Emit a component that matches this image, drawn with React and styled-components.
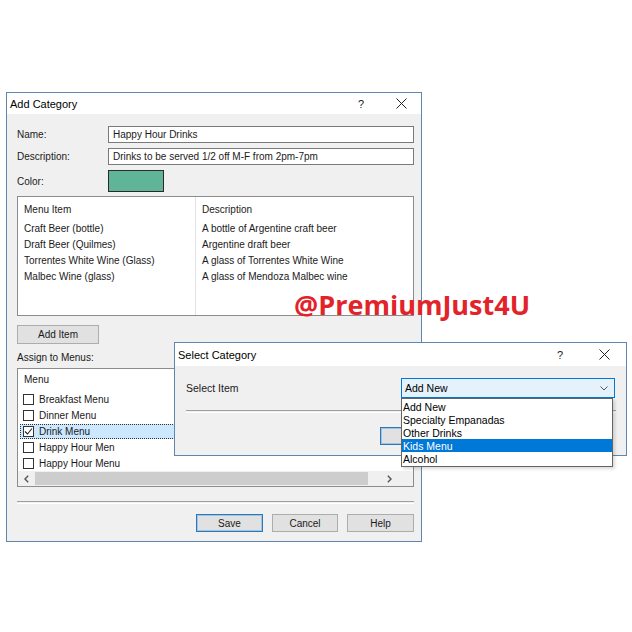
import React from 'react';
import styled, { createGlobalStyle } from 'styled-components';

const GlobalStyle = createGlobalStyle`
  html, body {
    margin: 0;
    padding: 0;
    background: #fff;
  }
  body {
    font-family: "Liberation Sans", Arial, sans-serif;
    font-size: 10px;
    color: #1a1a1a;
  }
`;

const menuItems = [
  { name: 'Craft Beer (bottle)', desc: 'A bottle of Argentine craft beer' },
  { name: 'Draft Beer (Quilmes)', desc: 'Argentine draft beer' },
  { name: 'Torrentes White Wine (Glass)', desc: 'A glass of Torrentes White Wine' },
  { name: 'Malbec Wine (glass)', desc: 'A glass of Mendoza Malbec wine' },
];

const menus = [
  { name: 'Breakfast Menu', checked: false },
  { name: 'Dinner Menu', checked: false },
  { name: 'Drink Menu', checked: true, focused: true },
  { name: 'Happy Hour Men', checked: false },
  { name: 'Happy Hour Menu', checked: false },
];

const categories = ['Add New', 'Specialty Empanadas', 'Other Drinks', 'Kids Menu', 'Alcohol'];

const Desktop = styled.div`
  position: relative;
  width: 632px;
  height: 632px;
  overflow: hidden;
`;

const Window = styled.div`
  position: absolute;
  left: ${p => p.$left}px;
  top: ${p => p.$top}px;
  width: ${p => p.$width}px;
  height: ${p => p.$height}px;
  box-sizing: border-box;
  border: 1px solid #5f87ae;
  background: #f0f0f0;
  display: flex;
  flex-direction: column;
`;

const TitleBar = styled.div`
  height: ${p => p.$h}px;
  flex: none;
  background: #fff;
  display: flex;
  align-items: center;
  padding-left: 3px;
`;

const Title = styled.div`
  flex: 1;
  font-size: 11px;
  color: #000;
`;

const TitleBtn = styled.div`
  width: ${p => p.$w}px;
  height: 100%;
  display: flex;
  align-items: center;
  justify-content: center;
  font-size: 11px;
  color: #222;
`;

const Body = styled.div`
  flex: 1;
  display: flex;
  flex-direction: column;
  padding: ${p => p.$pad};
`;

const FormGrid = styled.div`
  display: grid;
  grid-template-columns: 91px 1fr;
  grid-template-rows: 17px 17px 22px;
  row-gap: 5px;
  align-items: center;
`;

const Label = styled.div`
  white-space: nowrap;
`;

const TextBox = styled.div`
  height: 17px;
  box-sizing: border-box;
  border: 1px solid #7a7a7a;
  background: #fff;
  display: flex;
  align-items: center;
  padding-left: 4px;
  white-space: nowrap;
`;

const Swatch = styled.div`
  width: 56px;
  height: 22px;
  box-sizing: border-box;
  border: 1px solid #2a2a2a;
  background: #60b598;
`;

const ListView = styled.div`
  margin-top: 4px;
  height: 120px;
  box-sizing: border-box;
  border: 1px solid #8c8c8c;
  background: #fff;
  display: grid;
  grid-template-columns: 178px 1fr;
`;

const Column = styled.div`
  display: flex;
  flex-direction: column;
  padding: 6px 0 0 6px;
  border-right: ${p => (p.$divider ? '1px solid #e3e3e3' : 'none')};
`;

const ColHead = styled.div`
  height: 14px;
  line-height: 14px;
  margin-bottom: 4px;
  white-space: nowrap;
`;

const Cell = styled.div`
  height: 16px;
  line-height: 16px;
  white-space: nowrap;
`;

const Button = styled.div`
  width: ${p => p.$w}px;
  height: ${p => p.$h || 18}px;
  box-sizing: border-box;
  border: 1px solid ${p => (p.$default ? '#2f78b8' : '#adadad')};
  box-shadow: ${p => (p.$default ? 'inset 0 0 0 1px #9cc5e8' : 'none')};
  background: #e1e1e1;
  display: flex;
  align-items: center;
  justify-content: center;
  color: #1a1a1a;
  flex: none;
`;

const AddRow = styled.div`
  margin-top: 9px;
`;

const SectionLabel = styled.div`
  margin-top: 8px;
  height: 12px;
  line-height: 12px;
`;

const MenuBox = styled.div`
  margin-top: 4px;
  height: 119px;
  box-sizing: border-box;
  border: 1px solid #8c8c8c;
  background: #fff;
  display: flex;
  flex-direction: column;
  padding-top: 3px;
`;

const MenuHead = styled.div`
  height: 16px;
  line-height: 16px;
  padding-left: 6px;
  margin-bottom: 3px;
`;

const MenuRow = styled.div`
  height: 16px;
  display: flex;
  align-items: center;
`;

const MenuRowInner = styled.div`
  margin-left: 2px;
  flex: 1;
  height: 15px;
  box-sizing: border-box;
  display: flex;
  align-items: center;
  gap: 5px;
  padding-left: 2px;
  background: ${p => (p.$focused ? '#cce8ff' : 'transparent')};
  border: 1px ${p => (p.$focused ? 'dotted #333' : 'solid transparent')};
`;

const Check = styled.div`
  width: 11px;
  height: 11px;
  box-sizing: border-box;
  border: 1px solid #333;
  background: #fff;
  display: flex;
  align-items: center;
  justify-content: center;
  flex: none;
`;

const ScrollBar = styled.div`
  margin-top: auto;
  height: 15px;
  background: #f0f0f0;
  display: flex;
  align-items: stretch;
`;

const ScrollArrow = styled.div`
  width: 17px;
  display: flex;
  align-items: center;
  justify-content: center;
  flex: none;
`;

const Thumb = styled.div`
  width: 333px;
  background: #cdcdcd;
  margin: 1px 0;
  flex: none;
`;

const Corner = styled.div`
  width: 15px;
  flex: none;
`;

const Gap = styled.div`
  flex: 1;
`;

const Separator = styled.div`
  margin-top: ${p => p.$mt}px;
  height: 1px;
  border-top: 1px solid #a0a0a0;
  border-bottom: 1px solid #fff;
`;

const ButtonRow = styled.div`
  margin-top: ${p => p.$mt}px;
  display: flex;
  justify-content: ${p => p.$justify || 'flex-end'};
  gap: ${p => p.$gap}px;
  padding-left: ${p => p.$indent || 0}px;
`;

const SelectRow = styled.div`
  margin-top: 12px;
  display: grid;
  grid-template-columns: 215px 214px;
  align-items: center;
  font-size: 10.5px;
`;

const ComboWrap = styled.div`
  position: relative;
`;

const Combo = styled.div`
  height: 20px;
  box-sizing: border-box;
  border: 1px solid #0078d7;
  background: #e5f1fb;
  display: flex;
  align-items: center;
  padding: 0 6px 0 3px;
  color: #000;
`;

const ComboText = styled.div`
  flex: 1;
`;

const DropList = styled.div`
  position: absolute;
  top: 100%;
  left: 0;
  width: 212px;
  box-sizing: border-box;
  border: 1px solid #646464;
  padding: 1px 0 1px;
  background: #fff;
  box-shadow: 2px 2px 3px rgba(0, 0, 0, 0.15);
  z-index: 5;
`;

const DropItem = styled.div`
  height: 13px;
  line-height: 15px;
  padding-left: 1px;
  font-size: 10.5px;
  background: ${p => (p.$selected ? '#0078d7' : 'transparent')};
  color: ${p => (p.$selected ? '#fff' : '#000')};
  white-space: nowrap;
  overflow: hidden;
`;

const Watermark = styled.div`
  position: absolute;
  left: 294px;
  top: 289px;
  font-family: "Open Sans", "Liberation Sans", sans-serif;
  font-weight: 700;
  font-size: 27px;
  line-height: 1.2;
  color: #e3232a;
  white-space: nowrap;
  z-index: 10;
`;

const CloseIcon = () => (
  <svg width="11" height="11" viewBox="0 0 11 11">
    <path d="M0.5 0.5 L10.5 10.5 M10.5 0.5 L0.5 10.5" stroke="#222" strokeWidth="1" fill="none" />
  </svg>
);

const Chevron = () => (
  <svg width="8" height="5" viewBox="0 0 8 5">
    <path d="M0.5 0.5 L4 4 L7.5 0.5" stroke="#555" strokeWidth="1" fill="none" />
  </svg>
);

const Tick = () => (
  <svg width="9" height="9" viewBox="0 0 9 9">
    <path d="M1 4.5 L3.5 7 L8 1.5" stroke="#222" strokeWidth="1.1" fill="none" />
  </svg>
);

const ArrowIcon = ({ dir }) => (
  <svg width="5" height="8" viewBox="0 0 5 8">
    <path
      d={dir === 'left' ? 'M4.2 0.8 L1 4 L4.2 7.2' : 'M0.8 0.8 L4 4 L0.8 7.2'}
      stroke="#555"
      strokeWidth="1.4"
      fill="none"
    />
  </svg>
);

const TitleBarRow = ({ title, h, w }) => (
  <TitleBar $h={h}>
    <Title>{title}</Title>
    <TitleBtn $w={w}>?</TitleBtn>
    <TitleBtn $w={w}><CloseIcon /></TitleBtn>
  </TitleBar>
);

const AddCategory = () => (
  <Window $left={6} $top={92} $width={416} $height={450}>
    <TitleBarRow title="Add Category" h={21} w={40} />
    <Body $pad="12px 7px 9px 10px">
      <FormGrid>
        <Label>Name:</Label>
        <TextBox>Happy Hour Drinks</TextBox>
        <Label>Description:</Label>
        <TextBox>Drinks to be served 1/2 off M-F from 2pm-7pm</TextBox>
        <Label>Color:</Label>
        <Swatch />
      </FormGrid>

      <ListView>
        <Column $divider>
          <ColHead>Menu Item</ColHead>
          {menuItems.map(item => <Cell key={item.name}>{item.name}</Cell>)}
        </Column>
        <Column>
          <ColHead>Description</ColHead>
          {menuItems.map(item => <Cell key={item.desc}>{item.desc}</Cell>)}
        </Column>
      </ListView>

      <AddRow>
        <Button $w={82} $h={19}>Add Item</Button>
      </AddRow>

      <SectionLabel>Assign to Menus:</SectionLabel>
      <MenuBox>
        <MenuHead>Menu</MenuHead>
        {menus.map(menu => (
          <MenuRow key={menu.name}>
            <MenuRowInner $focused={menu.focused}>
              <Check>{menu.checked && <Tick />}</Check>
              {menu.name}
            </MenuRowInner>
          </MenuRow>
        ))}
        <ScrollBar>
          <ScrollArrow><ArrowIcon dir="left" /></ScrollArrow>
          <Thumb />
          <Gap />
          <ScrollArrow><ArrowIcon dir="right" /></ScrollArrow>
          <Corner />
        </ScrollBar>
      </MenuBox>

      <Separator $mt={14} />
      <ButtonRow $mt={10} $gap={9}>
        <Button $w={67} $default>Save</Button>
        <Button $w={66}>Cancel</Button>
        <Button $w={67}>Help</Button>
      </ButtonRow>
    </Body>
  </Window>
);

const SelectCategory = () => (
  <Window $left={174} $top={342} $width={453} $height={114}>
    <TitleBarRow title="Select Category" h={23} w={44} />
    <Body $pad="0 10px 0 11px">
      <SelectRow>
        <Label>Select Item</Label>
        <ComboWrap>
          <Combo>
            <ComboText>Add New</ComboText>
            <Chevron />
          </Combo>
          <DropList>
            {categories.map(c => (
              <DropItem key={c} $selected={c === 'Kids Menu'}>{c}</DropItem>
            ))}
          </DropList>
        </ComboWrap>
      </SelectRow>
      <Separator $mt={12} />
      {/* default button sits under the open drop list, only its left edge shows */}
      <ButtonRow $mt={14} $gap={9} $justify="flex-start" $indent={194}>
        <Button $w={72} $default />
      </ButtonRow>
    </Body>
  </Window>
);

const App = () => (
  <Desktop>
    <GlobalStyle />
    <AddCategory />
    <SelectCategory />
    <Watermark>@PremiumJust4U</Watermark>
  </Desktop>
);

export default App;
